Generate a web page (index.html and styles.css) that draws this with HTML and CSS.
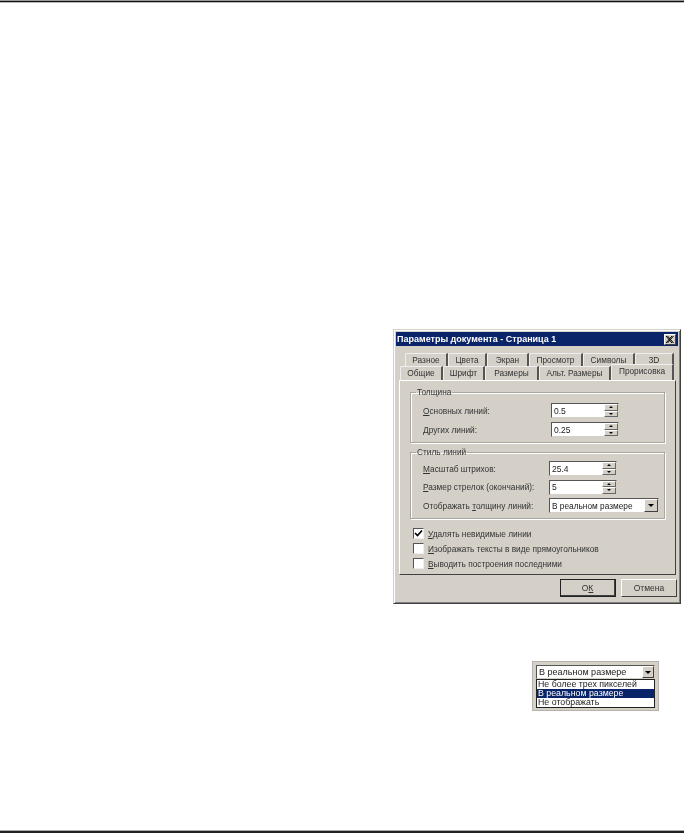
FILE: index.html
```html
<!DOCTYPE html>
<html lang="ru">
<head>
  <meta charset="UTF-8" />
  <title>Параметры документа</title>
  <link rel="stylesheet" href="styles.css">
</head>
<body>
  <div class="rule rule-top"></div>

  <div class="content">
    <div class="dialog">
      <div class="titlebar">
        <span>Параметры документа - Страница 1</span>
        <span class="close">
          <svg width="8" height="7" viewBox="0 0 8 7"><path d="M0 0L6 7M1.5 0L7.5 7M6 0L0 7M7.5 0L1.5 7" stroke="#000" fill="none"/></svg>
        </span>
      </div>

      <div class="tabs tabs-back">
        <div class="tab w43">Разное</div>
        <div class="tab w39">Цвета</div>
        <div class="tab w42">Экран</div>
        <div class="tab w54">Просмотр</div>
        <div class="tab w52">Символы</div>
        <div class="tab w39">3D</div>
      </div>
      <div class="tabs tabs-front">
        <div class="tab w43">Общие</div>
        <div class="tab w42">Шрифт</div>
        <div class="tab w54">Размеры</div>
        <div class="tab w72">Альт. Размеры</div>
        <div class="tab tab-active">Прорисовка</div>
      </div>

      <div class="panel">
        <fieldset class="group group-first">
          <legend>Толщина</legend>
          <div class="row">
            <label><u>О</u>сновных линий:</label>
            <div class="spin"><span>0.5</span><div class="spin-btns"><i class="up"></i><i class="down"></i></div></div>
          </div>
          <div class="row">
            <label><u>Д</u>ругих линий:</label>
            <div class="spin"><span>0.25</span><div class="spin-btns"><i class="up"></i><i class="down"></i></div></div>
          </div>
        </fieldset>

        <fieldset class="group group-second">
          <legend>Стиль линий</legend>
          <div class="row">
            <label><u>М</u>асштаб штрихов:</label>
            <div class="spin"><span>25.4</span><div class="spin-btns"><i class="up"></i><i class="down"></i></div></div>
          </div>
          <div class="row">
            <label><u>Р</u>азмер стрелок (окончаний):</label>
            <div class="spin"><span>5</span><div class="spin-btns"><i class="up"></i><i class="down"></i></div></div>
          </div>
          <div class="row">
            <label>Отображать <u>т</u>олщину линий:</label>
            <div class="combo"><span>В реальном размере</span><b class="combo-btn"><i class="down"></i></b></div>
          </div>
        </fieldset>

        <div class="checks">
          <div class="check">
            <span class="box"><svg width="9" height="9" viewBox="0 0 9 9"><path d="M1 4l2.5 2.5L8 1.5" stroke="#000" stroke-width="1.7" fill="none"/></svg></span>
            <span><u>У</u>далять невидимые линии</span>
          </div>
          <div class="check"><span class="box"></span><span><u>И</u>зображать тексты в виде прямоугольников</span></div>
          <div class="check"><span class="box"></span><span><u>В</u>ыводить построения последними</span></div>
        </div>
      </div>

      <div class="buttons">
        <div class="btn btn-default">О<u>К</u></div>
        <div class="btn">Отмена</div>
      </div>
    </div>

    <div class="dropdown">
      <div class="combo combo-small"><span>В реальном размере</span><b class="combo-btn"><i class="down"></i></b></div>
      <ul class="list">
        <li>Не более трех пикселей</li>
        <li class="selected">В реальном размере</li>
        <li>Не отображать</li>
      </ul>
    </div>
  </div>

  <div class="rule rule-bottom"></div>
</body>
</html>
```

FILE: styles.css
```css
* {
  box-sizing: border-box;
}

body {
  margin: 0;
  height: 833px;
  display: flex;
  flex-direction: column;
  background: #fff;
  color: #333;
  font-family: "Liberation Sans", Arial, sans-serif;
  font-size: 8.3px;
  overflow: hidden;
}

.rule {
  height: 3px;
  flex: none;
}

.rule-top {
  background: linear-gradient(#999 0 1px, #111 1px 2px, #bbb 2px);
}

.rule-bottom {
  background: linear-gradient(#aaa 0 1px, #222 1px);
}

.content {
  flex: 1;
  display: flex;
  flex-direction: column;
  align-items: flex-end;
  padding: 326px 3px 0 0;
}

/* dialog window */
.dialog {
  width: 288px;
  height: 275px;
  background: #d4d0c8;
  border: 1px solid;
  border-color: #d4d0c8 #404040 #404040 #d4d0c8;
  box-shadow: inset 1px 1px 0 #fff, inset -1px -1px 0 #808080;
  padding: 2px;
  filter: blur(0.4px);
}

.titlebar {
  height: 14px;
  background: #0a246a;
  color: #fff;
  font-weight: bold;
  font-size: 9px;
  display: flex;
  align-items: center;
  justify-content: space-between;
  padding: 0 2px 0 1px;
}

.close {
  width: 12px;
  height: 11px;
  background: #d4d0c8;
  border: 1px solid;
  border-color: #fff #404040 #404040 #fff;
  display: flex;
  align-items: center;
  justify-content: center;
}

/* tabs */
.tabs {
  display: flex;
}

.tabs-back {
  margin-top: 7px;
  padding-left: 9px;
  height: 13px;
}

.tabs-front {
  padding-left: 4px;
  height: 14px;
}

.tab {
  height: 100%;
  padding-top: 1px;
  line-height: 10px;
  text-align: center;
  border-top: 1px solid #eee;
  border-left: 1px solid #eee;
  border-right: 2px solid #555;
  border-top-left-radius: 2px;
  white-space: nowrap;
}

.w39 { width: 39px; }
.w42 { width: 42px; }
.w43 { width: 43px; }
.w52 { width: 52px; }
.w54 { width: 54px; }
.w72 { width: 72px; }

.tab-active {
  width: 63px;
  height: 16px;
  margin-top: -2px;
  position: relative;
  z-index: 1;
  background: #d4d0c8;
}

.panel {
  width: 277px;
  height: 195px;
  margin-left: 3px;
  border: 1px solid;
  border-color: #fff #404040 #404040 #fff;
  padding: 6px 10px 0;
}

/* groups */
.group {
  margin: 0;
  padding: 0 0 0 12px;
  width: 255px;
  border: 1px solid #a9a69f;
  box-shadow: 1px 1px 0 #fff, inset 1px 1px 0 #fff;
  display: flex;
  flex-direction: column;
}

.group legend {
  margin-left: -7px;
  padding: 0 1px;
  line-height: 10px;
}

.group-first {
  height: 56px;
  gap: 4px;
  padding-top: 6px;
}

.group-second {
  height: 72px;
  gap: 3.5px;
  margin-top: 4px;
  padding-top: 4px;
}

.row {
  display: flex;
  align-items: center;
  justify-content: space-between;
  height: 15px;
  white-space: nowrap;
}

.group-first .row {
  padding-right: 45px;
}

.group-second .row {
  padding-right: 5px;
}

.group-second .spin {
  margin-right: 42px;
}

/* inputs */
.spin {
  width: 68px;
  height: 15px;
  background: #fff;
  color: #222;
  border: 1px solid;
  border-color: #555 #d4d0c8 #d4d0c8 #555;
  display: flex;
  align-items: center;
  justify-content: space-between;
  padding-left: 2px;
  font-size: 8.5px;
}

.spin-btns {
  width: 14px;
  height: 13px;
  display: flex;
  flex-direction: column;
}

.spin-btns i {
  flex: 1;
  background: #d4d0c8;
  border: 1px solid;
  border-color: #fff #666 #666 #fff;
  display: flex;
  align-items: center;
  justify-content: center;
}

.spin-btns i::after {
  content: "";
  border-left: 2px solid transparent;
  border-right: 2px solid transparent;
}

.spin-btns .up::after {
  border-bottom: 2px solid #000;
}

.spin-btns .down::after {
  border-top: 2px solid #000;
}

.combo {
  width: 110px;
  height: 15px;
  background: #fff;
  color: #222;
  border: 1px solid;
  border-color: #555 #d4d0c8 #d4d0c8 #555;
  display: flex;
  align-items: center;
  justify-content: space-between;
  padding-left: 2px;
  font-size: 8.3px;
  white-space: nowrap;
}

.combo-btn {
  width: 14px;
  height: 13px;
  background: #d4d0c8;
  border: 1px solid;
  border-color: #fff #404040 #404040 #fff;
  display: flex;
  align-items: center;
  justify-content: center;
}

.combo-btn i {
  border-left: 3px solid transparent;
  border-right: 3px solid transparent;
  border-top: 3px solid #000;
}

/* checkboxes */
.checks {
  margin-top: 8px;
  margin-left: 3px;
  display: flex;
  flex-direction: column;
  gap: 2px;
}

.check {
  height: 13px;
  display: flex;
  align-items: center;
  gap: 4px;
}

.box {
  width: 11px;
  height: 11px;
  background: #fff;
  border: 1px solid;
  border-color: #555 #eee #eee #555;
  display: flex;
  align-items: center;
  justify-content: center;
}

/* bottom buttons */
.buttons {
  display: flex;
  justify-content: flex-end;
  gap: 5px;
  margin-top: 4px;
  padding-right: 1px;
}

.btn {
  width: 56px;
  height: 18px;
  border: 1px solid;
  border-color: #fff #404040 #404040 #fff;
  display: flex;
  align-items: center;
  justify-content: center;
  font-size: 8.5px;
}

.btn-default {
  outline: 1px solid #222;
  outline-offset: -1px;
  border-right-width: 2px;
  border-bottom-width: 2px;
}

/* dropdown sample */
.dropdown {
  width: 127px;
  height: 50px;
  margin-top: 57px;
  margin-right: 22px;
  background: #d4d0c8;
  border: 1px solid #b5b2ab;
  padding: 3px 3px 2px;
  filter: blur(0.4px);
}

.combo-small {
  width: 100%;
  height: 14px;
  font-size: 9px;
}

.combo-small .combo-btn {
  width: 12px;
  height: 12px;
}

.list {
  margin: 0;
  padding: 0;
  list-style: none;
  background: #fff;
  border: 1px solid #222;
  color: #222;
  font-size: 8.8px;
  line-height: 9px;
}

.list li {
  padding-left: 1px;
}

.list .selected {
  background: #0a246a;
  color: #fff;
}
```
